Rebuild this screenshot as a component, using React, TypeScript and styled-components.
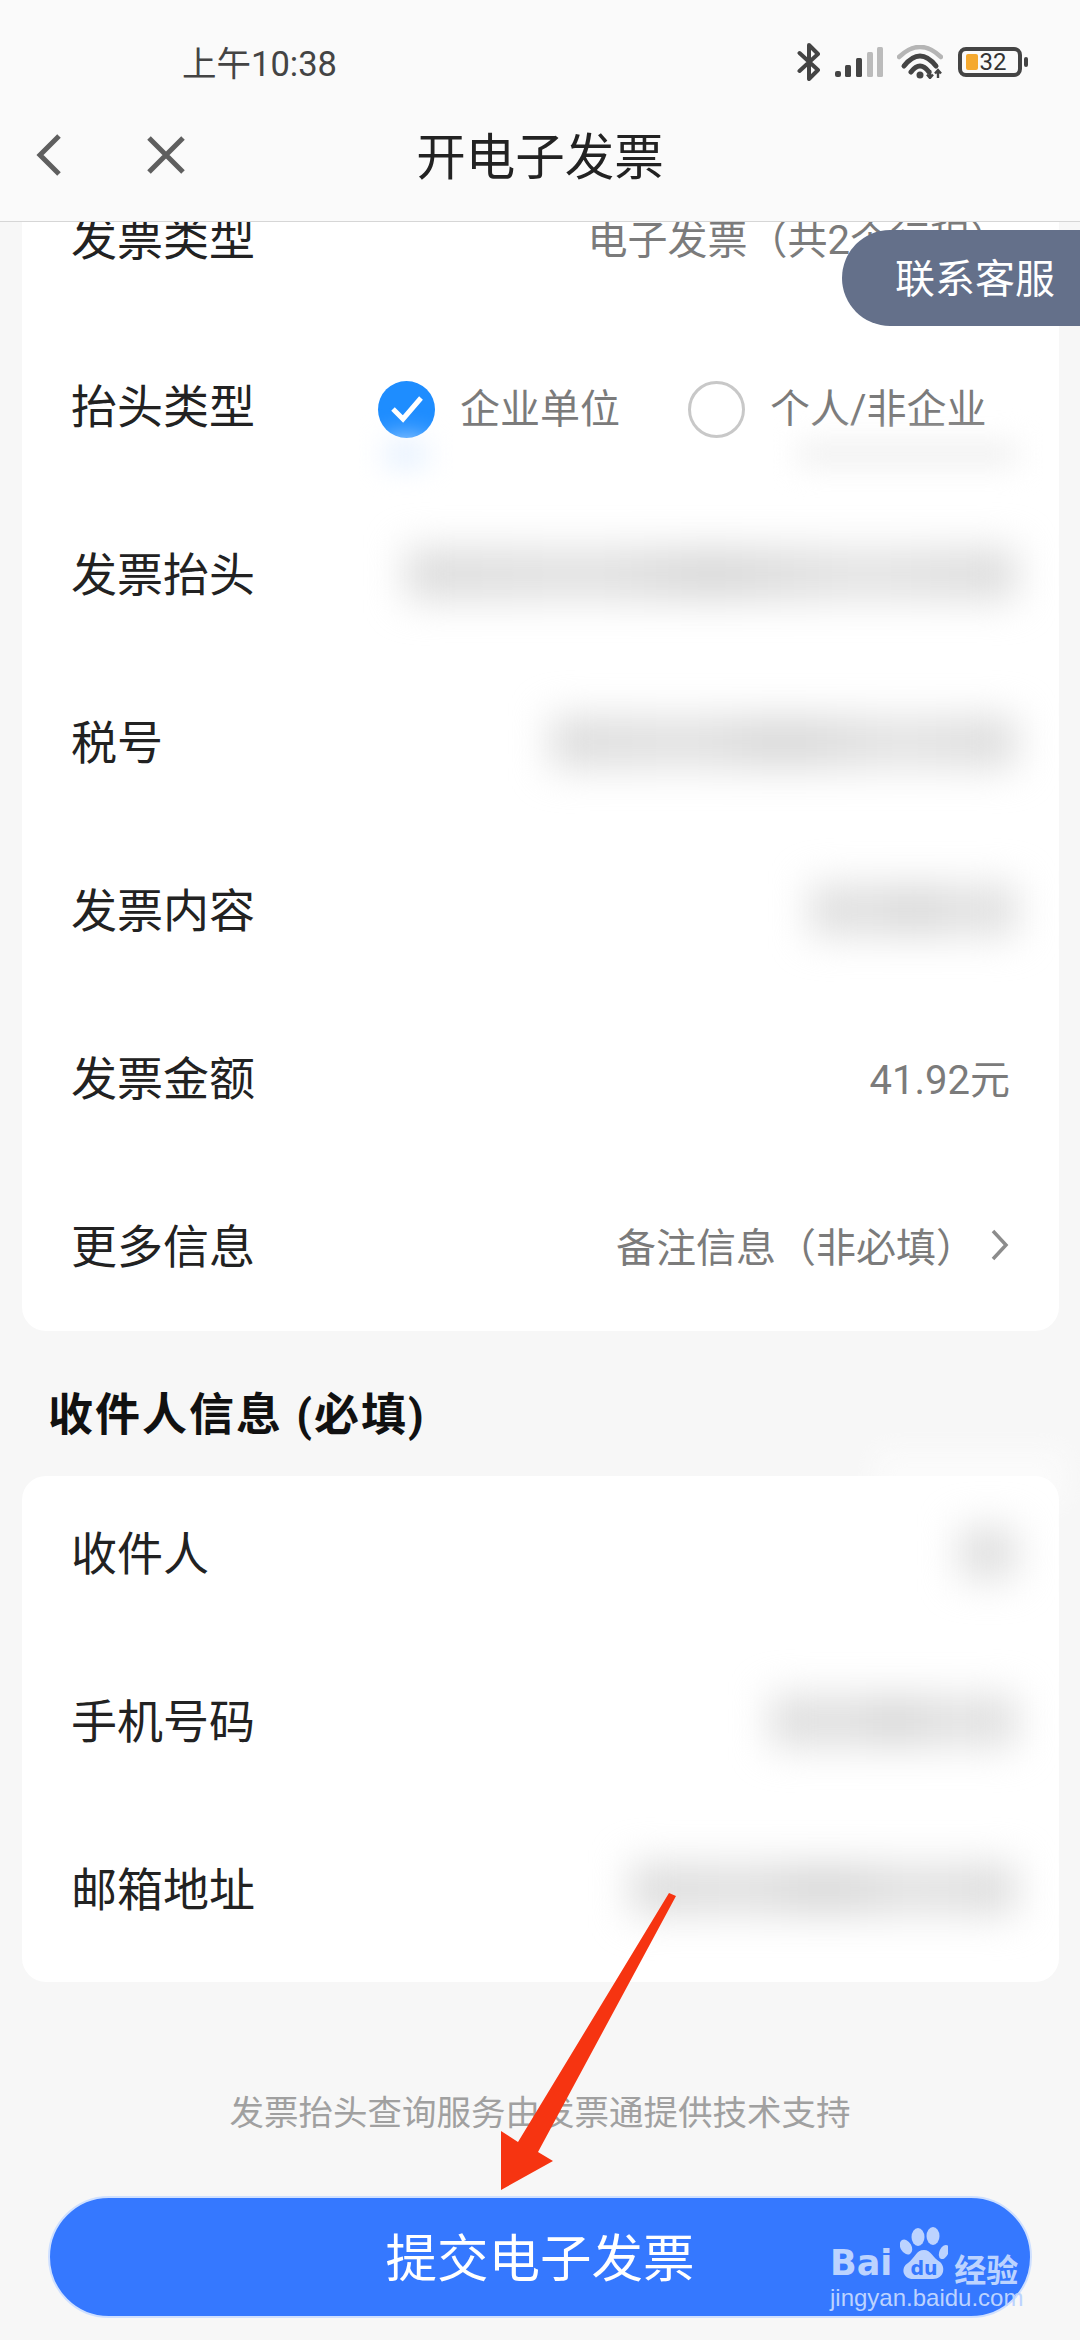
import React from 'react';
import styled, { createGlobalStyle } from 'styled-components';

const GlobalStyle = createGlobalStyle`
  html, body {
    margin: 0;
    padding: 0;
    background: #f7f7f7;
  }
`;

const Page = styled.div`
  position: relative;
  width: 1080px;
  height: 2340px;
  overflow: hidden;
  background: #f7f7f7;
  font-family: Roboto, "Noto Sans CJK SC", sans-serif;
`;

const Header = styled.header`
  position: relative;
  z-index: 2;
  height: 222px;
  box-sizing: border-box;
  background: #fafafa;
  border-bottom: 1px solid #d6d6d6;
`;

const StatusBar = styled.div`
  height: 94px;
  box-sizing: border-box;
  padding: 30px 54px 0 182px;
  display: flex;
  align-items: center;
  justify-content: space-between;
`;

const Clock = styled.span`
  font-size: 34.5px;
  color: #444;
  margin-bottom: 2px;
`;

const StatusIcons = styled.div`
  display: flex;
  align-items: center;
`;

const SignalIcon = styled.svg`
  margin-left: 14px;
`;

const WifiIcon = styled.svg`
  margin-left: 14px;
`;

const Battery = styled.div`
  position: relative;
  width: 64px;
  height: 30px;
  box-sizing: border-box;
  margin-left: 15px;
  margin-right: 4px;
  border: 4px solid #444;
  border-radius: 8px;
  display: flex;
  align-items: center;
  justify-content: center;
  font-size: 24px;
  line-height: 1;
  color: #333;

  &::before {
    content: '';
    position: absolute;
    left: 4px;
    top: 3px;
    width: 12px;
    height: 16px;
    background: #f5a92f;
    border-radius: 2px;
  }

  &::after {
    content: '';
    position: absolute;
    right: -10px;
    top: 6px;
    width: 4px;
    height: 10px;
    background: #444;
    border-radius: 2px;
  }
`;

const BatteryLevel = styled.span`
  position: relative;
  margin-left: 6px;
`;

const NavBar = styled.nav`
  height: 127px;
  box-sizing: border-box;
  padding-bottom: 6px;
  display: grid;
  grid-template-columns: 1fr auto 1fr;
  align-items: center;
`;

const NavButtons = styled.div`
  display: flex;
  align-items: center;
  gap: 81px;
  padding-left: 35px;
`;

const Title = styled.h1`
  margin: 0 0 2px;
  font-size: 49.5px;
  font-weight: 400;
  color: #222;
`;

const ServicePill = styled.div`
  position: absolute;
  z-index: 1;
  right: 0;
  top: 230px;
  width: 238px;
  height: 96px;
  box-sizing: border-box;
  padding: 0 0 5px 53px;
  display: flex;
  align-items: center;
  background: #64708a;
  border-radius: 48px 0 0 48px;
  color: #fff;
  font-size: 40px;
`;

const Scroller = styled.main`
  margin-top: -61px;
`;

const Card = styled.section<{ $bottom: number }>`
  position: relative;
  margin: 0 21px 0 22px;
  padding-bottom: ${(p) => p.$bottom}px;
  display: flex;
  flex-direction: column;
  gap: 14px;
  background: #fff;
  border-radius: 24px;
`;

const Row = styled.div`
  height: 154px;
  padding: 0 49px 0 49px;
  display: flex;
  align-items: center;
  justify-content: space-between;
`;

const Label = styled.span`
  font-size: 46px;
  color: #222;
  white-space: nowrap;
  margin-bottom: 6px;
`;

const Value = styled.span`
  font-size: 40px;
  color: #7b7b7b;
  white-space: nowrap;
  margin-bottom: 2px;
`;

const MoreValue = styled.span`
  display: flex;
  align-items: center;
  gap: 14px;
  font-size: 40px;
  color: #7b7b7b;
  margin-bottom: 2px;
`;

const Smudge = styled.div<{ $width: number }>`
  width: ${(p) => p.$width}px;
  height: 52px;
  margin-right: -6px;
  background: linear-gradient(90deg, #dcdcdc, #e2e2e2 30%, #d8d8d8 50%, #e4e4e4 75%, #dcdcdc);
  filter: blur(19px);
`;

const Options = styled.div`
  display: flex;
  align-items: center;
  gap: 68px;
  margin-left: 123px;
  margin-right: auto;
`;

const Option = styled.label`
  position: relative;
  display: flex;
  align-items: center;
  gap: 25px;
  font-size: 40px;
  color: #7b7b7b;
  white-space: nowrap;
`;

const RadioOn = styled.span`
  width: 57px;
  height: 57px;
  margin-top: 6px;
  border-radius: 50%;
  background: #1e8dff;
  display: flex;
  align-items: center;
  justify-content: center;
`;

const RadioOff = styled.span`
  width: 57px;
  height: 57px;
  margin-top: 6px;
  box-sizing: border-box;
  border-radius: 50%;
  border: 3px solid #c8c8c8;
`;

const OptionGhost = styled.div<{ $width: number; $left: number; $color: string }>`
  position: absolute;
  top: 66px;
  left: ${(p) => p.$left}px;
  width: ${(p) => p.$width}px;
  height: 26px;
  background: ${(p) => p.$color};
  filter: blur(14px);
`;

const CardGlow = styled.div`
  position: absolute;
  top: -26px;
  right: -6px;
  width: 190px;
  height: 54px;
  background: #fff;
  opacity: 0.5;
  filter: blur(14px);
`;

const SectionTitle = styled.h2`
  margin: 55px 0 30px;
  padding-left: 48px;
  font-size: 45px;
  line-height: 60px;
  letter-spacing: 2px;
  font-weight: 700;
  color: #111;
`;

const Hint = styled.p`
  margin: 108px 0 0;
  font-size: 34.5px;
  line-height: 46px;
  color: #a0a0a0;
  text-align: center;
`;

const SubmitButton = styled.button`
  display: block;
  width: 984px;
  height: 122px;
  margin: 60px 0 0 48px;
  padding: 0 0 5px;
  border: 2px solid #cfe0ff;
  border-radius: 61px;
  background: #3578ff;
  color: #fff;
  font-family: inherit;
  font-size: 51.5px;
`;

const ArrowMark = styled.svg`
  position: absolute;
  z-index: 3;
  left: 490px;
  top: 1885px;
`;

const Watermark = styled.div`
  position: absolute;
  z-index: 3;
  left: 830px;
  top: 2226px;
  width: 200px;
  color: #bcd3ff;
`;

const LogoLine = styled.div`
  display: flex;
  align-items: flex-end;
  height: 54px;
`;

const LogoBai = styled.span`
  font-family: "DejaVu Sans", sans-serif;
  font-weight: 700;
  font-size: 35px;
  line-height: 1;
  margin-bottom: -1px;
`;

const LogoPaw = styled.svg`
  margin-left: 8px;
`;

const LogoCn = styled.span`
  margin-left: 6px;
  font-family: "Noto Sans CJK SC", sans-serif;
  font-weight: 700;
  font-size: 32px;
  line-height: 1;
  margin-bottom: -4px;
`;

const LogoUrl = styled.div`
  margin-top: 4px;
  font-family: "Liberation Sans", sans-serif;
  font-size: 24px;
  line-height: 28px;
  white-space: nowrap;
`;

const GRAY = '#5f5f5f';

const Smudged = ({ label, width }: { label: string; width: number }) => (
  <Row>
    <Label>{label}</Label>
    <Smudge $width={width} />
  </Row>
);

const App: React.FC = () => {
  return (
    <Page>
      <GlobalStyle />
      <Header>
        <StatusBar>
          <Clock>上午10:38</Clock>
          <StatusIcons>
            <svg width="24" height="38" viewBox="0 0 24 38" fill="none">
              <path d="M2.5 10 L21 27 L12 36 V2 L21 11 L2.5 28" stroke="#444" strokeWidth="4" strokeLinejoin="round" strokeLinecap="round" />
            </svg>
            <SignalIcon width="48" height="30" viewBox="0 0 48 30">
              <rect x="0" y="24" width="6" height="6" rx="2" fill="#444" />
              <rect x="10" y="18" width="6" height="12" rx="1.5" fill="#444" />
              <rect x="21" y="11" width="6" height="19" rx="1.5" fill="#444" />
              <rect x="32" y="5" width="6" height="25" rx="1.5" fill="#bbb" />
              <rect x="42" y="0" width="6" height="30" rx="1.5" fill="#bbb" />
            </SignalIcon>
            <WifiIcon width="46" height="34" viewBox="0 0 46 34" fill="none">
              <path d="M2 12 Q23 -8 44 12" stroke="#b5b5b5" strokeWidth="4.5" strokeLinecap="round" />
              <path d="M7 21 Q23 1 39 21" stroke="#444" strokeWidth="5" strokeLinecap="round" />
              <path d="M14 27 Q23 15 32 27" stroke="#444" strokeWidth="5" strokeLinecap="round" />
              <circle cx="23" cy="30" r="3.5" fill="#444" />
              <path d="M33 25 V33 M30 29.5 L33 33 L36 29.5 M41 33 V25 M38 28.5 L41 25 L44 28.5" stroke="#444" strokeWidth="2.4" />
            </WifiIcon>
            <Battery>
              <BatteryLevel>32</BatteryLevel>
            </Battery>
          </StatusIcons>
        </StatusBar>
        <NavBar>
          <NavButtons>
            <svg width="30" height="44" viewBox="0 0 30 44" fill="none">
              <path d="M24 3 L5 22 L24 41" stroke={GRAY} strokeWidth="5" />
            </svg>
            <svg width="40" height="40" viewBox="0 0 40 40" fill="none">
              <path d="M3 3 L37 37 M37 3 L3 37" stroke={GRAY} strokeWidth="5" />
            </svg>
          </NavButtons>
          <Title>开电子发票</Title>
        </NavBar>
      </Header>

      <ServicePill>联系客服</ServicePill>

      <Scroller>
        <Card $bottom={8}>
          <Row>
            <Label>发票类型</Label>
            <Value>电子发票（共2个行程）</Value>
          </Row>
          <Row>
            <Label>抬头类型</Label>
            <Options>
              <Option>
                <RadioOn>
                  <svg width="36" height="30" viewBox="0 0 36 30" fill="none">
                    <path d="M4 15 L14 25 L32 4" stroke="#fff" strokeWidth="5" />
                  </svg>
                </RadioOn>
                企业单位
                <OptionGhost $left={6} $width={44} $color="#e6f1ff" />
              </Option>
              <Option>
                <RadioOff />
                个人/非企业
                <OptionGhost $left={110} $width={220} $color="#f1f1f1" />
              </Option>
            </Options>
          </Row>
          <Smudged label="发票抬头" width={610} />
          <Smudged label="税号" width={465} />
          <Smudged label="发票内容" width={205} />
          <Row>
            <Label>发票金额</Label>
            <Value>41.92元</Value>
          </Row>
          <Row>
            <Label>更多信息</Label>
            <MoreValue>
              备注信息（非必填）
              <svg width="20" height="32" viewBox="0 0 20 32" fill="none">
                <path d="M3 2 L16 16 L3 30" stroke="#8c8c8c" strokeWidth="3.5" />
              </svg>
            </MoreValue>
          </Row>
        </Card>

        <SectionTitle>收件人信息 (必填)</SectionTitle>

        <Card $bottom={16}>
          <CardGlow />
          <Smudged label="收件人" width={56} />
          <Smudged label="手机号码" width={245} />
          <Smudged label="邮箱地址" width={385} />
        </Card>

        <Hint>发票抬头查询服务由发票通提供技术支持</Hint>
        <SubmitButton>提交电子发票</SubmitButton>
      </Scroller>

      <ArrowMark width="200" height="315" viewBox="0 0 200 315">
        <polygon points="179,8 186,11 48,267 63,276 11,305 11,246 28,257" fill="#f63411" />
      </ArrowMark>

      <Watermark>
        <LogoLine>
          <LogoBai>Bai</LogoBai>
          <LogoPaw width="48" height="54" viewBox="0 0 48 54" fill="currentColor">
            <ellipse cx="18" cy="11" rx="6.5" ry="9" />
            <ellipse cx="33" cy="10" rx="6.5" ry="9" />
            <ellipse cx="6" cy="21" rx="5.5" ry="8" transform="rotate(-30 6 21)" />
            <ellipse cx="44" cy="26" rx="4.5" ry="7.5" transform="rotate(25 44 26)" />
            <path d="M24 24 C31 24 33 32 40 36 C46 41 44 53 33 53 H13 C3 53 0 42 8 37 C15 32 16 24 24 24 Z" />
            <text x="24" y="49" textAnchor="middle" fontFamily="DejaVu Sans, sans-serif" fontSize="19" fontWeight="700" fill="#3578ff">du</text>
          </LogoPaw>
          <LogoCn>经验</LogoCn>
        </LogoLine>
        <LogoUrl>jingyan.baidu.com</LogoUrl>
      </Watermark>
    </Page>
  );
};

export default App;
